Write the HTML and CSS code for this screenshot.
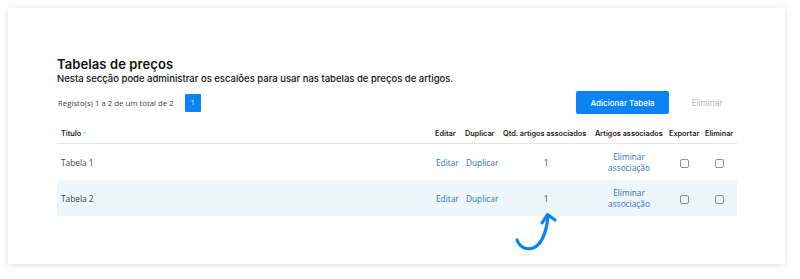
FILE: index.html
```html
<!DOCTYPE html>
<html lang="pt">
<head>
<meta charset="utf-8">
<link rel="stylesheet" href="styles.css">
</head>
<body>
<div class="card">
  <h1 class="title">Tabelas de preços</h1>
  <p class="subtitle">Nesta secção pode administrar os escalões para usar nas tabelas de preços de artigos.</p>
  <div class="toolbar">
    <div class="records">
      <span class="records-text">Registo(s) 1 a 2 de um total de 2</span>
      <span class="page">1</span>
    </div>
    <div class="actions">
      <button class="btn-primary">Adicionar Tabela</button>
      <button class="btn-disabled">Eliminar</button>
    </div>
  </div>
  <table class="grid">
    <colgroup>
      <col class="c-title"><col class="c-edit"><col class="c-dup"><col class="c-qtd"><col class="c-art"><col class="c-exp"><col class="c-del">
    </colgroup>
    <thead>
      <tr>
        <th class="th-title">Título <span class="caret">^</span></th>
        <th>Editar</th>
        <th>Duplicar</th>
        <th>Qtd. artigos associados</th>
        <th>Artigos associados</th>
        <th>Exportar</th>
        <th>Eliminar</th>
      </tr>
    </thead>
    <tbody>
      <tr>
        <td class="name">Tabela 1</td>
        <td><a class="link">Editar</a></td>
        <td><a class="link">Duplicar</a></td>
        <td class="center">1</td>
        <td class="center"><a class="link">Eliminar<br>associação</a></td>
        <td class="center"><span class="check"></span></td>
        <td class="center"><span class="check"></span></td>
      </tr>
      <tr class="alt">
        <td class="name">Tabela 2</td>
        <td><a class="link">Editar</a></td>
        <td><a class="link">Duplicar</a></td>
        <td class="center">1</td>
        <td class="center"><a class="link">Eliminar<br>associação</a></td>
        <td class="center"><span class="check"></span></td>
        <td class="center"><span class="check"></span></td>
      </tr>
    </tbody>
  </table>
</div>
<svg class="arrow" width="50" height="50" viewBox="0 0 50 50">
  <path d="M7 30 C10 38 17 40 23 38 C31 35 36 24 38 7" fill="none" stroke="#0a82f0" stroke-width="3.2" stroke-linecap="round"/>
  <path d="M32 13 L37.5 4.5 L45 10" fill="none" stroke="#0a82f0" stroke-width="3.2" stroke-linecap="round" stroke-linejoin="round"/>
</svg>
</body>
</html>
```
FILE: styles.css
```css
html, body {
  margin: 0;
  padding: 0;
  background: #ffffff;
}
body {
  position: relative;
  width: 800px;
  height: 279px;
  overflow: hidden;
  font-family: "Open Sans", "Liberation Sans", sans-serif;
}
.card {
  margin: 8px 0 0 8px;
  width: 777px;
  height: 256px;
  box-sizing: border-box;
  padding: 47px 48px 0 49px;
  background: #fff;
  box-shadow: 0 1px 6px rgba(40, 50, 70, 0.16);
}
.title {
  margin: 0;
  font-family: Inter, "Noto Sans", sans-serif;
  font-weight: 600;
  font-size: 13px;
  line-height: 18px;
  color: #111;
  letter-spacing: 0.1px;
}
.subtitle {
  margin: 0;
  font-family: Inter, "Noto Sans", sans-serif;
  font-weight: 500;
  font-size: 9.5px;
  line-height: 12px;
  color: #111;
}
.toolbar {
  display: flex;
  justify-content: space-between;
  align-items: center;
  margin-top: 6px;
  width: 680px;
}
.records {
  display: flex;
  align-items: center;
  gap: 11px;
  padding-left: 1px;
}
.records-text {
  font-size: 7.8px;
  color: #444;
}
.page {
  display: inline-flex;
  align-items: center;
  justify-content: center;
  width: 16px;
  height: 18px;
  background: #0a84f5;
  color: #fff;
  font-size: 7px;
  border-radius: 1px;
}
.actions {
  display: flex;
  align-items: center;
}
.btn-primary {
  width: 93px;
  height: 23px;
  border: none;
  border-radius: 2px;
  background: #0a84f5;
  color: #fff;
  font-family: Inter, "Noto Sans", sans-serif;
  font-weight: 500;
  font-size: 8px;
  padding: 0;
}
.btn-disabled {
  width: 68px;
  height: 23px;
  border: none;
  background: transparent;
  color: #b5b9be;
  font-family: Inter, "Noto Sans", sans-serif;
  font-size: 8.3px;
  padding: 0 0 0 8px;
}
.grid {
  margin-top: 10px;
  width: 680px;
  border-collapse: collapse;
  table-layout: fixed;
}
.c-title { width: 375px; }
.c-edit { width: 30px; }
.c-dup { width: 38px; }
.c-qtd { width: 92px; }
.c-art { width: 74px; }
.c-exp { width: 36px; }
.c-del { width: 35px; }
.grid th {
  font-family: Inter, "Noto Sans", sans-serif;
  font-weight: 600;
  font-size: 7.3px;
  color: #222;
  text-align: left;
  white-space: nowrap;
  padding: 0 0 0 3px;
  height: 19px;
  border-bottom: 1px solid #e3e5e8;
}
.grid th.th-title {
  padding-left: 4px;
}
.caret {
  color: #999;
  font-weight: 400;
  font-size: 6px;
}
.grid td {
  font-size: 8.3px;
  color: #444;
  height: 36px;
  padding: 0 0 0 4px;
  vertical-align: middle;
}
.grid td.name {
  padding-left: 4px;
}
.grid td.center {
  text-align: center;
  padding: 0;
}
.grid tr.alt td {
  background: #edf6fa;
}
.link {
  color: #2f72b8;
  line-height: 11px;
  display: inline-block;
}
.check {
  display: inline-block;
  width: 7px;
  height: 7px;
  border: 1px solid #8a8f95;
  border-radius: 2px;
  vertical-align: middle;
}
.arrow {
  position: absolute;
  left: 510px;
  top: 210px;
}
```
